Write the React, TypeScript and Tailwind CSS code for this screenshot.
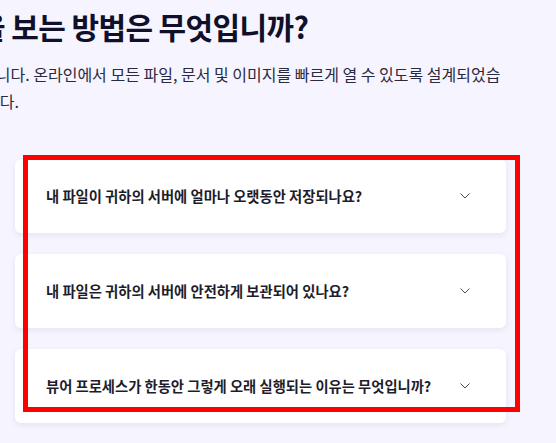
import React from 'react';

interface Faq {
  question: string;
}

// Two columns of questions; the list is laid out as a grid
const faqs: Faq[] = [
  { question: '어떤 파일 형식을 열 수 있나요?' },
  { question: '내 파일이 귀하의 서버에 얼마나 오랫동안 저장되나요?' },
  { question: '파일 뷰어는 무료로 사용할 수 있나요?' },
  { question: '내 파일은 귀하의 서버에 안전하게 보관되어 있나요?' },
  { question: '휴대폰에서도 파일을 볼 수 있나요?' },
  { question: '뷰어 프로세스가 한동안 그렇게 오래 실행되는 이유는 무엇입니까?' },
];

function Chevron() {
  return (
    <svg width="10" height="6" viewBox="0 0 10 6" fill="none" className="shrink-0">
      <path d="M0.5 0.5l4.5 4.5 4.5-4.5" stroke="#4a4a5c" strokeWidth="1" />
    </svg>
  );
}

function FaqCard({ question }: Faq) {
  return (
    <div className="flex h-[74px] items-center justify-between rounded-md bg-white pl-[31px] pr-[36px] shadow-[0_2px_6px_rgba(40,30,110,0.08)]">
      <span className="text-[14.3px] font-bold text-[#1d1d2b]">{question}</span>
      <Chevron />
    </div>
  );
}

export default function App() {
  return (
    <div
      className="relative h-[443px] w-full overflow-hidden bg-[#f6f4fe]"
      style={{ fontFamily: '"Noto Sans CJK KR", "Noto Sans", sans-serif' }}
    >
      <div className="ml-[-502px] w-[1008px]">
        <h2 className="pt-[6px] text-center text-[30px] font-bold leading-[40px] tracking-[-0.6px] text-[#10102a]">
          무료로 온라인에서 파일을 보는 방법은 무엇입니까?
        </h2>
        <p className="mt-[15px] text-center text-[16px] leading-[27px] text-[#2a2a3e]">
          파일 뷰어는 설치도 없이 모든 브라우저에서 곧바로 작동하는 무료 웹 도구입니다. 온라인에서 모든 파일, 문서 및 이미지를 빠르게 열 수 있도록 설계되었습니다.
        </p>
        <div className="mt-[44px] grid grid-cols-2 gap-x-[26px] gap-y-[21px]">
          {faqs.map((f) => (
            <FaqCard key={f.question} question={f.question} />
          ))}
        </div>
      </div>
      {/* highlight frame around the questions */}
      <div className="pointer-events-none absolute left-[23px] top-[155px] h-[257px] w-[497px] border-[5px] border-[#ff0000]" />
    </div>
  );
}
